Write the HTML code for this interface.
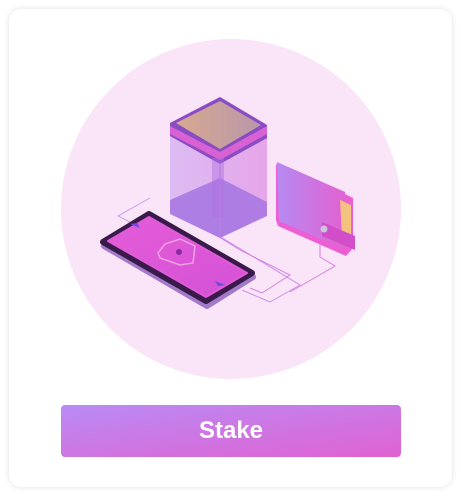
<!DOCTYPE html>
<html><head><style>
body{margin:0;width:461px;height:496px;background:#fff;overflow:hidden;font-family:"Liberation Sans",sans-serif}
.card{position:absolute;left:9px;top:9px;width:443px;height:478px;border-radius:12px;background:#fff;box-shadow:0 0 6px rgba(0,0,0,.13)}
.btn{position:absolute;left:61px;top:405px;width:340px;height:52px;border-radius:4px;background:linear-gradient(172deg,#b98bf5,#e062d2);color:#fff;font-weight:bold;font-size:24px;text-align:center;line-height:52px}
svg{position:absolute;left:0;top:0}
</style></head><body>
<div class="card"></div>
<svg width="461" height="496" viewBox="0 0 461 496">
<defs>
<linearGradient id="ph" x1="0" y1="0" x2="1" y2="1"><stop offset="0" stop-color="#e45cd8"/><stop offset="1" stop-color="#d452d6"/></linearGradient>
<linearGradient id="wl" x1="0" y1="0" x2="1" y2="0"><stop offset="0" stop-color="#b58af2"/><stop offset="1" stop-color="#e460d0"/></linearGradient>
<linearGradient id="bx" x1="0" y1="0" x2="1" y2="0"><stop offset="0" stop-color="#d9b8f2"/><stop offset="1" stop-color="#e59ee8"/></linearGradient>
<linearGradient id="tp" x1="0" y1="0" x2="1" y2="0"><stop offset="0" stop-color="#d8a890"/><stop offset="1" stop-color="#b898a8"/></linearGradient>
</defs>
<circle cx="231" cy="209" r="170" fill="#f9e4f8"/>
<g fill="none" stroke-width="1">
<polyline points="150,198 118,216 130,222" stroke="#c9a0f0"/>
<polyline points="196,222 300,285 270,302 242,290" stroke="#c890f0"/>
<polyline points="176,210 240,250 290,275 262,293 250,288" stroke="#d880e0"/>
<polyline points="320,230 320,257 335,266 290,292" stroke="#d880e0"/>
</g>
<!-- box -->
<path d="M170,123 L220,97 L267,125 L267,215 L220,238 L170,213Z" fill="url(#bx)" opacity=".9"/>
<path d="M170,200 L220,178 L267,202 L267,216 L220,238 L170,214Z" fill="#a474e2" opacity=".85"/>
<path d="M220,155 L220,238" stroke="#c080e0" stroke-width="1"/>
<path d="M170,123 L220,97 L267,125 L267,138 L220,164 L170,136Z" fill="#8a4cc4"/>
<path d="M176,123 L220,101 L261,125 L220,149Z" fill="url(#tp)"/>
<path d="M170,126 L220,152 L267,126 L267,134 L220,160 L170,134Z" fill="#d862d4"/>
<rect x="212" y="158" width="12" height="60" fill="#b070e0" opacity=".45"/>
<!-- wallet -->
<path d="M276,164 L345,194 L353,198 L353,248 L346,256 L278,226 L276,220Z" fill="#ec5fd4"/>
<path d="M277,162 L345,192 L347,250 L279,221Z" fill="url(#wl)"/>
<path d="M340,200 L351,205 L351,240 L342,236Z" fill="#f2c27e"/>
<path d="M322,222 L355,236 L355,250 L322,236Z" fill="#d24ec8"/>
<circle cx="324" cy="229" r="3.5" fill="#c8c8dc"/>
<!-- phone -->
<path d="M104,246 L150,217 L253,277 L207,306Z" fill="#a27ac8" stroke="#a27ac8" stroke-width="6" stroke-linejoin="round"/>
<path d="M103,242 L149,214 L252,273 L206,301Z" fill="#3a1a4a" stroke="#3a1a4a" stroke-width="6" stroke-linejoin="round"/>
<path d="M108,241 L149,217 L247,273 L206,297Z" fill="url(#ph)" stroke="#e05cd8" stroke-width="2" stroke-linejoin="round"/>
<path d="M158,253 L165,244 L180,239 L195,246 L193,263 L180,265 L160,258Z" fill="none" stroke="#f0a0e0" stroke-width="1.5"/>
<circle cx="179" cy="252" r="3" fill="#8a2aa0"/>
<path d="M130,224 l10,4 l-3,-5z" fill="#6a4ae0"/>
<path d="M225,285 l-10,-4 l3,5z" fill="#6a4ae0"/>
</svg>
<div class="btn">Stake</div>
</body></html>
